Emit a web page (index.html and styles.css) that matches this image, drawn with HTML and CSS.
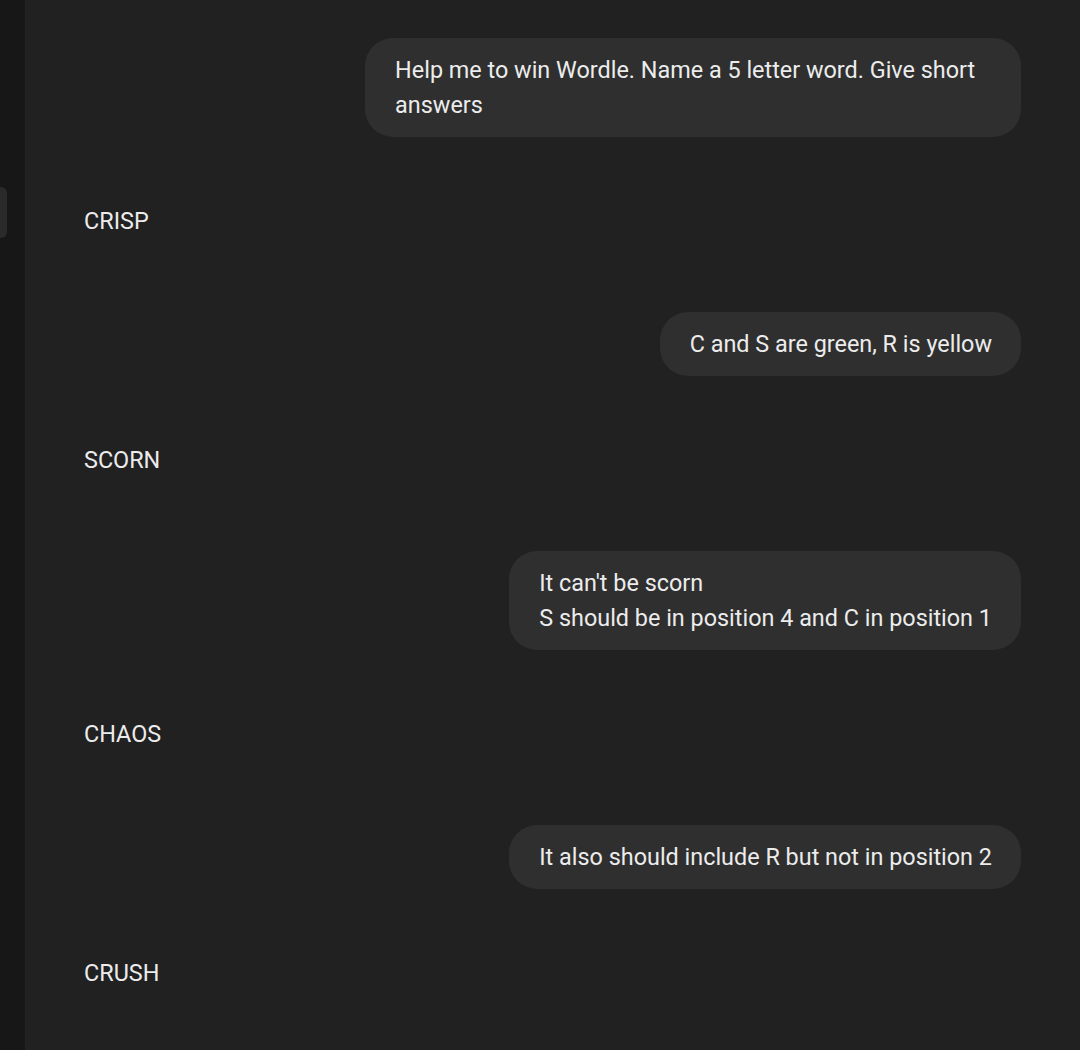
FILE: index.html
```html
<!DOCTYPE html>
<html lang="en">
<head>
    <meta charset="UTF-8">
    <meta name="viewport" content="width=device-width, initial-scale=1.0">
    <title>Wordle chat</title>
    <link rel="stylesheet" href="styles.css">
</head>
<body>
    <div class="app">
        <aside class="sidebar">
            <div class="sidebar-tab"></div>
        </aside>
        <main class="main">
            <div class="thread">
                <div class="turn user">
                    <div class="bubble">Help me to win Wordle. Name a 5 letter word. Give short answers</div>
                </div>
                <div class="turn assistant">CRISP</div>
                <div class="turn user">
                    <div class="bubble">C and S are green, R is yellow</div>
                </div>
                <div class="turn assistant">SCORN</div>
                <div class="turn user">
                    <div class="bubble">It can't be scorn<br>S should be in position 4 and C in position 1</div>
                </div>
                <div class="turn assistant">CHAOS</div>
                <div class="turn user">
                    <div class="bubble">It also should include R but not in position 2</div>
                </div>
                <div class="turn assistant">CRUSH</div>
            </div>
        </main>
    </div>
</body>
</html>
```

FILE: styles.css
```css
body {
    margin: 0;
    padding: 0;
    background-color: #212121;
    color: #ececec;
    font-family: Roboto, "Noto Sans", sans-serif;
    font-size: 23.4px;
    line-height: 35px;
}
.app {
    display: flex;
    height: 1050px;
    overflow: hidden;
}
.sidebar {
    width: 25px;
    flex-shrink: 0;
    background-color: #171717;
    padding-top: 187px;
    box-sizing: border-box;
}
.sidebar-tab {
    width: 7px;
    height: 51px;
    background-color: #2a2a2a;
    border-radius: 0 6px 6px 0;
}
.main {
    flex: 1;
    padding: 38px 59px 0;
}
.thread {
    display: flex;
    flex-direction: column;
}
.turn.user {
    display: flex;
    justify-content: flex-end;
}
.bubble {
    max-width: 70%;
    box-sizing: border-box;
    padding: 15px 29px 14px 30px;
    background-color: #2f2f2f;
    border-radius: 28px;
}
.turn.assistant {
    padding: 67px 0 73px;
}
```
